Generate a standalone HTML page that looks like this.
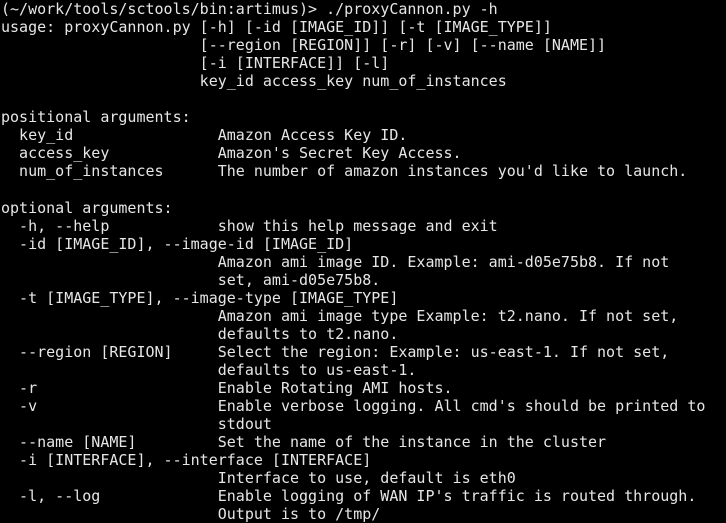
<html><head><style>
body{margin:0;background:#000;width:726px;height:522px;overflow:hidden}
pre{margin:0;position:absolute;left:1px;top:0px;font-family:"DejaVu Sans Mono","Liberation Mono",monospace;font-size:15px;letter-spacing:0px;line-height:18.05px;color:#e6e6e6}
</style></head><body><pre>(~/work/tools/sctools/bin:artimus)&gt; ./proxyCannon.py -h
usage: proxyCannon.py [-h] [-id [IMAGE_ID]] [-t [IMAGE_TYPE]]
                      [--region [REGION]] [-r] [-v] [--name [NAME]]
                      [-i [INTERFACE]] [-l]
                      key_id access_key num_of_instances

positional arguments:
  key_id                Amazon Access Key ID.
  access_key            Amazon's Secret Key Access.
  num_of_instances      The number of amazon instances you'd like to launch.

optional arguments:
  -h, --help            show this help message and exit
  -id [IMAGE_ID], --image-id [IMAGE_ID]
                        Amazon ami image ID. Example: ami-d05e75b8. If not
                        set, ami-d05e75b8.
  -t [IMAGE_TYPE], --image-type [IMAGE_TYPE]
                        Amazon ami image type Example: t2.nano. If not set,
                        defaults to t2.nano.
  --region [REGION]     Select the region: Example: us-east-1. If not set,
                        defaults to us-east-1.
  -r                    Enable Rotating AMI hosts.
  -v                    Enable verbose logging. All cmd's should be printed to
                        stdout
  --name [NAME]         Set the name of the instance in the cluster
  -i [INTERFACE], --interface [INTERFACE]
                        Interface to use, default is eth0
  -l, --log             Enable logging of WAN IP's traffic is routed through.
                        Output is to /tmp/
</pre></body></html>
